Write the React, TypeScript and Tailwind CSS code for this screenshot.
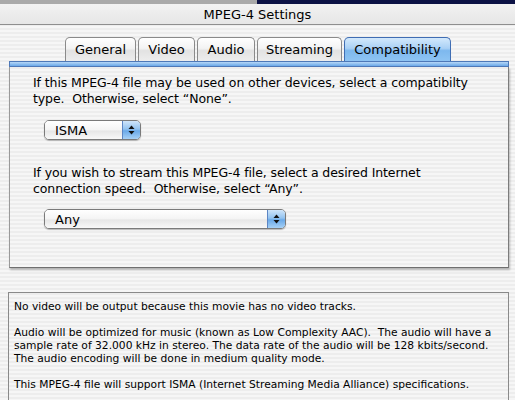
import React from "react";

const stripe =
  "bg-[repeating-linear-gradient(180deg,#ededed_0px,#ededed_2px,#f6f6f6_2px,#f6f6f6_4px)]";

function Tab({ label, w, selected }: { label: string; w: number; selected?: boolean }) {
  return (
    <div
      style={{ width: w }}
      className={
        selected
          ? "h-[24px] flex items-center justify-center rounded-t-[5px] border border-b-0 border-[#3f6db3] bg-[linear-gradient(180deg,#d3e9fc_0%,#a9d0f5_45%,#7db8ee_55%,#8ec4f3_100%)] text-black"
          : "h-[24px] flex items-center justify-center rounded-t-[5px] border border-b-0 border-[#8a8a8a] bg-[linear-gradient(180deg,#ffffff_0%,#f3f3f3_45%,#e2e2e2_55%,#ededed_100%)] text-black"
      }
    >
      <span className="text-[13px] leading-none">{label}</span>
    </div>
  );
}

function Arrows() {
  return (
    <svg width="7" height="10" viewBox="0 0 7 10">
      <polygon points="3.5,0.5 6.5,4 0.5,4" fill="#111" />
      <polygon points="3.5,9.5 6.5,6 0.5,6" fill="#111" />
    </svg>
  );
}

function Popup({ label, w }: { label: string; w: number }) {
  return (
    <div
      style={{ width: w }}
      className="h-[20px] flex rounded-[5px] border border-[#7a7a7a] overflow-hidden shadow-[0_1px_1px_rgba(0,0,0,0.25)]"
    >
      <div className="flex-1 flex items-center pl-[10px] bg-[linear-gradient(180deg,#ffffff_0%,#f4f4f4_50%,#e6e6e6_55%,#f8f8f8_100%)]">
        <span className="text-[13px] leading-none text-black">{label}</span>
      </div>
      <div className="w-[18px] flex items-center justify-center border-l border-[#5d86c4] bg-[linear-gradient(180deg,#cfe5fa_0%,#93c3f0_45%,#6aa9e8_55%,#a7d1f6_100%)]">
        <Arrows />
      </div>
    </div>
  );
}

export default function App() {
  return (
    <div
      className={`w-[515px] h-[400px] overflow-hidden ${stripe} text-black`}
      style={{ fontFamily: '"DejaVu Sans", "Liberation Sans", sans-serif' }}
    >
      <div className="h-[4px] flex">
        <div className="w-[257px] bg-[#a9a9a9]" />
        <div className="flex-1 bg-[#0c1245]" />
      </div>
      <div className="h-[21px] flex items-center justify-center border-b border-[#8e8e8e] bg-[linear-gradient(180deg,#f2f2f2,#e6e6e6)]">
        <span className="text-[13px] leading-none">MPEG-4 Settings</span>
      </div>
      <div className="pt-[12px] flex justify-center gap-[2px] pl-[1px]">
        <Tab label="General" w={71} />
        <Tab label="Video" w={57} />
        <Tab label="Audio" w={58} />
        <Tab label="Streaming" w={85} />
        <Tab label="Compatibility" w={107} selected />
      </div>
      <div className="mx-[9px] w-[500px]">
        <div className="h-[6px] border border-[#4d78b8] bg-[linear-gradient(180deg,#b6d7f7,#6aa8e8)]" />
        <div
          className={`h-[201px] border-l border-r border-b border-[#9a9a9a] border-r-[#7c7c7c] border-b-[#6f6f6f] shadow-[1px_2px_2px_rgba(0,0,0,0.25)] ${stripe} pl-[23px] pt-[8px]`}
        >
          <p className="text-[12.5px] leading-[16px] tracking-[-0.1px]">
            If this MPEG-4 file may be used on other devices, select a compatibilty
            <br />
            type.&nbsp; Otherwise, select “None”.
          </p>
          <div className="mt-[13px] ml-[11px]">
            <Popup label="ISMA" w={97} />
          </div>
          <p className="mt-[25px] text-[12.5px] leading-[16px] tracking-[-0.1px]">
            If you wish to stream this MPEG-4 file, select a desired Internet
            <br />
            connection speed.&nbsp; Otherwise, select “Any”.
          </p>
          <div className="mt-[12px] ml-[11px]">
            <Popup label="Any" w={242} />
          </div>
        </div>
      </div>
      <div
        className={`mt-[24px] mx-[8px] w-[501px] h-[120px] border border-[#8a8a8a] border-b-0 ${stripe} pl-[5px] pt-[7px]`}
      >
        <div className="text-[10.7px] leading-[13px]">
          <p>No video will be output because this movie has no video tracks.</p>
          <p className="mt-[13px]">
            Audio will be optimized for music (known as Low Complexity AAC).&nbsp; The audio will have a
            <br />
            sample rate of 32.000 kHz in stereo. The data rate of the audio will be 128 kbits/second.
            <br />
            The audio encoding will be done in medium quality mode.
          </p>
          <p className="mt-[13px]">
            This MPEG-4 file will support ISMA (Internet Streaming Media Alliance) specifications.
          </p>
        </div>
      </div>
    </div>
  );
}
